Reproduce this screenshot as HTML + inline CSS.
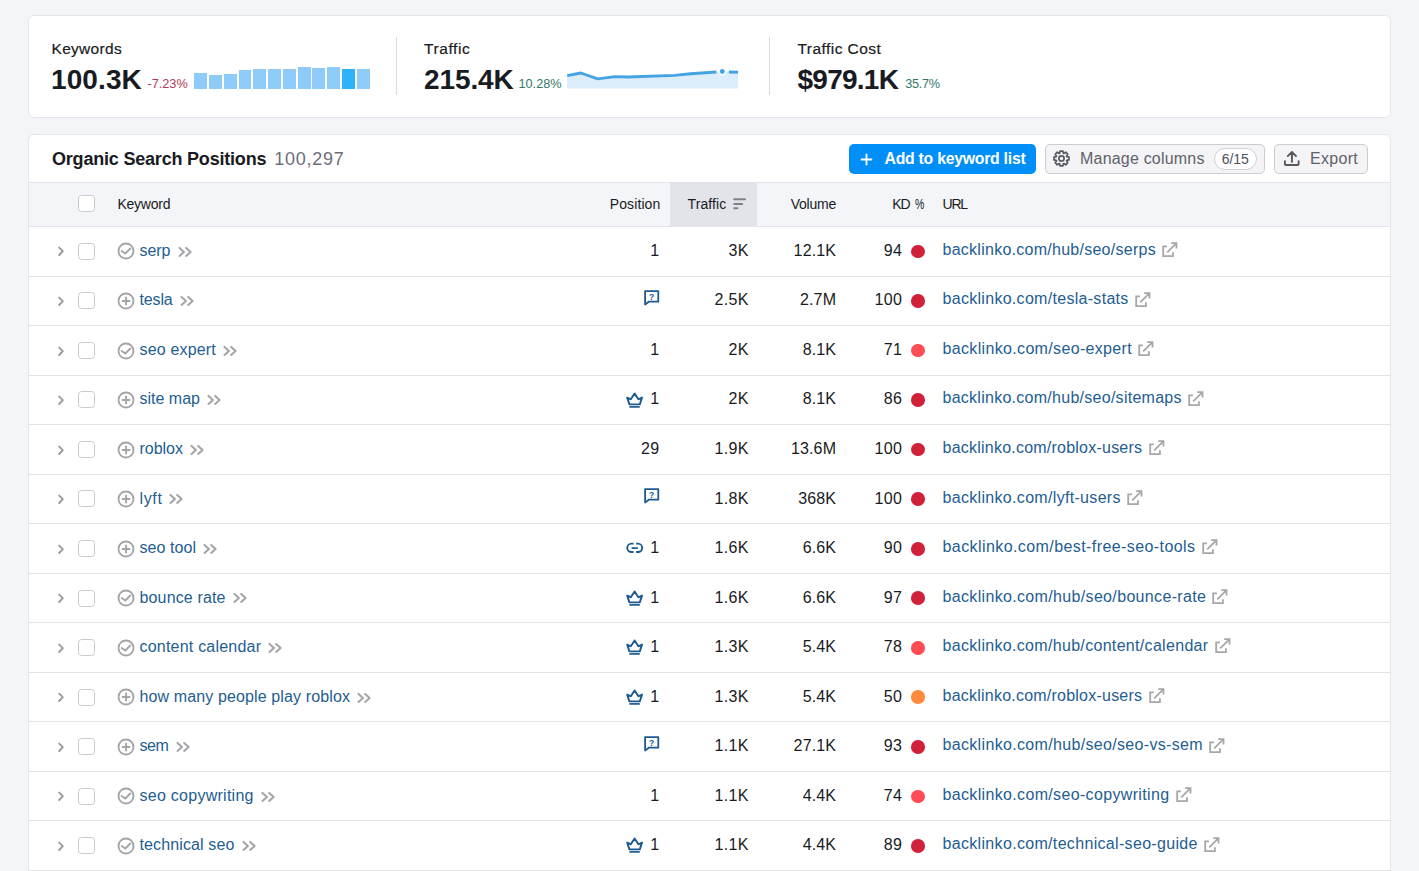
<!DOCTYPE html>
<html><head><meta charset="utf-8">
<style>
*{box-sizing:border-box;margin:0;padding:0}
html,body{width:1419px;height:871px;overflow:hidden;background:#f4f5f9;font-family:"Liberation Sans",sans-serif;color:#191b23}
.card{position:absolute;background:#fff;border:1px solid #e5e6ea;border-radius:6px}
.a{position:absolute}
.t{position:absolute;line-height:1;white-space:nowrap}
.sk{-webkit-text-stroke:0.2px currentColor}
.cb{width:17px;height:17px;border:1px solid #c9cacf;border-radius:3.5px;background:#fff}
</style></head><body>
<div class="card" style="left:28px;top:15px;width:1363px;height:103px"></div>
<div class="card" style="left:28px;top:134px;width:1363px;height:800px"></div>
<div class="t sk" style="left:51.50px;top:41.08px;font-size:15.5px;letter-spacing:0.3px;color:#191b23;font-weight:normal;">Keywords</div>
<div class="t " style="left:51.00px;top:65.80px;font-size:28px;letter-spacing:0.1px;color:#191b23;font-weight:bold;">100.3K</div>
<div class="t " style="left:147.50px;top:78.45px;font-size:12.7px;letter-spacing:0px;color:#b03a52;font-weight:normal;">-7.23%</div>
<div class="a" style="left:194.2px;top:72.7px;width:12.9px;height:16.2px;background:#8fcbf8"></div>
<div class="a" style="left:209.0px;top:74.5px;width:12.9px;height:14.4px;background:#8fcbf8"></div>
<div class="a" style="left:224.0px;top:73.7px;width:12.9px;height:15.2px;background:#8fcbf8"></div>
<div class="a" style="left:238.6px;top:69.9px;width:12.9px;height:19.0px;background:#8fcbf8"></div>
<div class="a" style="left:253.4px;top:68.9px;width:12.9px;height:20.0px;background:#8fcbf8"></div>
<div class="a" style="left:268.2px;top:68.9px;width:12.9px;height:20.0px;background:#8fcbf8"></div>
<div class="a" style="left:283.0px;top:69.2px;width:12.9px;height:19.7px;background:#8fcbf8"></div>
<div class="a" style="left:297.8px;top:67.0px;width:12.9px;height:21.9px;background:#8fcbf8"></div>
<div class="a" style="left:312.3px;top:68.0px;width:12.9px;height:20.9px;background:#8fcbf8"></div>
<div class="a" style="left:327.0px;top:67.0px;width:12.9px;height:21.9px;background:#8fcbf8"></div>
<div class="a" style="left:342.2px;top:69.2px;width:12.9px;height:19.7px;background:#2db3fa"></div>
<div class="a" style="left:357.0px;top:69.4px;width:12.9px;height:19.5px;background:#8fcbf8"></div>
<div class="a" style="left:396px;top:37px;width:1px;height:58px;background:#d9dae0"></div>
<div class="t sk" style="left:424.00px;top:41.08px;font-size:15.5px;letter-spacing:0.6px;color:#191b23;font-weight:normal;">Traffic</div>
<div class="t " style="left:424.00px;top:65.80px;font-size:28px;letter-spacing:-0.1px;color:#191b23;font-weight:bold;">215.4K</div>
<div class="t " style="left:518.50px;top:78.45px;font-size:12.7px;letter-spacing:0px;color:#2f7868;font-weight:normal;">10.28%</div>
<svg class="a" style="left:0px;top:0px" width="1419" height="120" viewBox="0 0 1419 120">
<path d="M567.2 75.6 L580.9 73 L597.8 78.9 L614.8 76.6 L627.8 77 L674.7 75.4 L690.4 73.7 L715.8 72 L722.3 71.5 L738 72 L738 88.4 L567.2 88.4 Z" fill="#dcedfc"/>
<path d="M567.2 75.6 L580.9 73 L597.8 78.9 L614.8 76.6 L627.8 77 L674.7 75.4 L690.4 73.7 L716.5 72" fill="none" stroke="#45a3e3" stroke-width="2.9" stroke-linejoin="round"/>
<path d="M728.8 72 L738 72.2" fill="none" stroke="#45a3e3" stroke-width="2.9"/>
<circle cx="722.3" cy="71.5" r="3.6" fill="#fff"/>
<circle cx="722.3" cy="71.5" r="2.4" fill="#43a2e4"/></svg>
<div class="a" style="left:769px;top:37px;width:1px;height:58px;background:#d9dae0"></div>
<div class="t sk" style="left:797.50px;top:41.08px;font-size:15.5px;letter-spacing:0.45px;color:#191b23;font-weight:normal;">Traffic Cost</div>
<div class="t " style="left:797.50px;top:65.80px;font-size:28px;letter-spacing:-0.75px;color:#191b23;font-weight:bold;">$979.1K</div>
<div class="t " style="left:905.20px;top:78.45px;font-size:12.7px;letter-spacing:-0.3px;color:#2f7868;font-weight:normal;">35.7%</div>
<div class="t " style="left:52.00px;top:150.26px;font-size:18px;letter-spacing:-0.2px;color:#191b23;font-weight:bold;">Organic Search Positions</div>
<div class="t " style="left:274.20px;top:150.26px;font-size:18px;letter-spacing:0.75px;color:#6c6e79;font-weight:normal;">100,297</div>
<div class="a" style="left:849px;top:144px;width:187px;height:30px;border-radius:5px;background:#008ff8"></div>
<svg class="a" style="left:860px;top:153px" width="13" height="13" viewBox="0 0 13 13"><path d="M6.5 0.8 V12.2 M0.8 6.5 H12.2" stroke="#fff" stroke-width="1.8"/></svg>
<div class="t " style="left:884.50px;top:151.13px;font-size:15.8px;letter-spacing:-0.25px;color:#fff;font-weight:bold;">Add to keyword list</div>
<div class="a" style="left:1045px;top:144px;width:220px;height:30px;border-radius:5px;background:#f4f4f6;border:1px solid #cbccd1"></div>
<svg class="a" style="left:1052.4px;top:149.1px" width="19" height="19" viewBox="0 0 19 19"><circle cx="9.5" cy="9.5" r="2.6" fill="none" stroke="#575961" stroke-width="1.7"/><path d="M7.63 4.22 L8.06 2.04 L10.94 2.04 L11.37 4.22 L11.91 4.45 L13.76 3.21 L15.79 5.24 L14.55 7.09 L14.78 7.63 L16.96 8.06 L16.96 10.94 L14.78 11.37 L14.55 11.91 L15.79 13.76 L13.76 15.79 L11.91 14.55 L11.37 14.78 L10.94 16.96 L8.06 16.96 L7.63 14.78 L7.09 14.55 L5.24 15.79 L3.21 13.76 L4.45 11.91 L4.22 11.37 L2.04 10.94 L2.04 8.06 L4.22 7.63 L4.45 7.09 L3.21 5.24 L5.24 3.21 L7.09 4.45 Z" fill="none" stroke="#575961" stroke-width="1.7" stroke-linejoin="round"/></svg>
<div class="t " style="left:1080.00px;top:150.86px;font-size:16px;letter-spacing:0.2px;color:#60626b;font-weight:normal;">Manage columns</div>
<div class="a" style="left:1214px;top:148px;width:42.5px;height:22px;border-radius:11px;background:#fff;border:1px solid #cfd0d4"></div>
<div class="t " style="left:1221.80px;top:152.45px;font-size:14px;letter-spacing:-0.1px;color:#4e5058;font-weight:normal;">6/15</div>
<div class="a" style="left:1274px;top:144px;width:94px;height:30px;border-radius:5px;background:#f4f4f6;border:1px solid #cbccd1"></div>
<svg class="a" style="left:1283px;top:150px" width="18" height="18" viewBox="0 0 18 18"><path d="M8.9 11.9 V2.4 M4.8 6.1 L8.9 2.0 L13.0 6.1 M1.9 11.2 V14.1 Q1.9 15 2.8 15 H14.7 Q15.6 15 15.6 14.1 V11.2" fill="none" stroke="#575961" stroke-width="1.9" stroke-linejoin="round" stroke-linecap="round"/></svg>
<div class="t " style="left:1310.00px;top:150.86px;font-size:16px;letter-spacing:0.3px;color:#60626b;font-weight:normal;">Export</div>
<div class="a" style="left:29px;top:182px;width:1361px;height:45px;background:#f4f5f9;border-top:1px solid #e3e4ea;border-bottom:1px solid #e3e4ea"></div>
<div class="a cb" style="left:78px;top:195px"></div>
<div class="t " style="left:117.50px;top:196.75px;font-size:14px;letter-spacing:-0.25px;color:#191b23;font-weight:normal;">Keyword</div>
<div class="t " style="left:0;width:660.40px;text-align:right;top:196.75px;font-size:14px;letter-spacing:0.1px;color:#191b23;font-weight:normal;">Position</div>
<div class="a" style="left:669.5px;top:183px;width:87px;height:43px;background:#e3e4ea"></div>
<div class="t " style="left:687.50px;top:196.75px;font-size:14px;letter-spacing:0.1px;color:#191b23;font-weight:normal;">Traffic</div>
<svg class="a" style="left:732px;top:197px" width="15" height="13" viewBox="0 0 15 13"><path d="M2.2 2.2 H13 M2.2 6.9 H10.2 M2.2 11.2 H5.4" stroke="#7e8089" stroke-width="2" stroke-linecap="round"/></svg>
<div class="t " style="left:0;width:835.95px;text-align:right;top:196.75px;font-size:14px;letter-spacing:-0.25px;color:#191b23;font-weight:normal;">Volume</div>
<div class="t " style="left:892.20px;top:196.75px;font-size:14px;letter-spacing:-1.0px;color:#191b23;font-weight:normal;">KD</div>
<div class="t " style="left:914.50px;top:196.75px;font-size:14px;letter-spacing:0px;color:#191b23;font-weight:normal;transform:scaleX(0.75);transform-origin:0 0">%</div>
<div class="t " style="left:942.60px;top:196.75px;font-size:14px;letter-spacing:-1.3px;color:#191b23;font-weight:normal;">URL</div>
<div class="a" style="left:28px;top:276px;width:1363px;height:1px;background:#e2e2e5"></div>
<svg class="a" style="left:57px;top:245.47px" width="8" height="12" viewBox="0 0 8 12"><path d="M2.2 2.6 L5.8 6.1 L2.2 10.0" fill="none" stroke="#9c9ca2" stroke-width="2" stroke-linecap="round" stroke-linejoin="round"/></svg>
<div class="a cb" style="left:78px;top:242.77px"></div>
<svg class="a" style="left:116.5px;top:242.47px" width="18" height="18" viewBox="0 0 18 18"><circle cx="9" cy="9" r="7.5" fill="none" stroke="#a3a3a8" stroke-width="1.8"/><path d="M4.6 9.0 L8.3 11.5 L13.3 6.5" fill="none" stroke="#a3a3a8" stroke-width="1.8" stroke-linecap="round" stroke-linejoin="round"/></svg>
<div class="t " style="left:139.50px;top:242.83px;font-size:16px;letter-spacing:-0.1px;color:#245d91;font-weight:normal;">serp</div>
<svg class="a" style="left:177.6px;top:245.67px" width="14" height="12" viewBox="0 0 14 12"><path d="M1.5 1.9 L5.9 5.9 L1.5 9.9 M8.2 1.9 L12.6 5.9 L8.2 9.9" fill="none" stroke="#a3a3a8" stroke-width="2.0" stroke-linecap="round" stroke-linejoin="round"/></svg>
<div class="t " style="left:0;width:659.50px;text-align:right;top:242.83px;font-size:16px;letter-spacing:0.3px;color:#191b23;font-weight:normal;">1</div>
<div class="t " style="left:0;width:748.70px;text-align:right;top:242.83px;font-size:16px;letter-spacing:0.3px;color:#191b23;font-weight:normal;">3K</div>
<div class="t " style="left:0;width:836.15px;text-align:right;top:242.83px;font-size:16px;letter-spacing:0.15px;color:#191b23;font-weight:normal;">12.1K</div>
<div class="t " style="left:0;width:902.20px;text-align:right;top:242.83px;font-size:16px;letter-spacing:0.3px;color:#191b23;font-weight:normal;">94</div>
<div class="a" style="left:911.2px;top:244.62px;width:13.7px;height:13.7px;border-radius:50%;background:#d1203a"></div>
<div class="t " style="left:942.50px;top:241.83px;font-size:16px;letter-spacing:0.262px;color:#245d91;font-weight:normal;">backlinko.com/hub/seo/serps</div>
<svg class="a" style="left:1162.1px;top:242.17px" width="16" height="16" viewBox="0 0 16 16"><path d="M4.9 4.3 H1.2 V14.2 H10.9 V10.3" fill="none" stroke="#a6a6ab" stroke-width="1.8"/><path d="M9.2 1.1 H14.5 V6.4 M14.5 1.1 L5.2 10.3" fill="none" stroke="#a6a6ab" stroke-width="1.8"/></svg>
<div class="a" style="left:28px;top:325px;width:1363px;height:1px;background:#e2e2e5"></div>
<svg class="a" style="left:57px;top:295.01px" width="8" height="12" viewBox="0 0 8 12"><path d="M2.2 2.6 L5.8 6.1 L2.2 10.0" fill="none" stroke="#9c9ca2" stroke-width="2" stroke-linecap="round" stroke-linejoin="round"/></svg>
<div class="a cb" style="left:78px;top:292.31px"></div>
<svg class="a" style="left:116.5px;top:292.01px" width="18" height="18" viewBox="0 0 18 18"><circle cx="9" cy="9" r="7.5" fill="none" stroke="#a3a3a8" stroke-width="1.8"/><path d="M9.1 4.8 V13.2 M4.9 9 H13.3" fill="none" stroke="#a3a3a8" stroke-width="1.9"/></svg>
<div class="t " style="left:139.50px;top:292.37px;font-size:16px;letter-spacing:-0.15px;color:#245d91;font-weight:normal;">tesla</div>
<svg class="a" style="left:180.0px;top:295.21px" width="14" height="12" viewBox="0 0 14 12"><path d="M1.5 1.9 L5.9 5.9 L1.5 9.9 M8.2 1.9 L12.6 5.9 L8.2 9.9" fill="none" stroke="#a3a3a8" stroke-width="2.0" stroke-linecap="round" stroke-linejoin="round"/></svg>
<svg class="a" style="left:643px;top:290.01px" width="17" height="17" viewBox="0 0 17 17"><path d="M2.1 14.5 V1.2 H15.3 V11.7 H5.8 Z" fill="none" stroke="#1d5a8f" stroke-width="1.8" stroke-linejoin="round"/><text x="8.7" y="9.6" font-size="8.5" font-family="Liberation Sans" font-weight="bold" fill="#1d5a8f" text-anchor="middle">?</text></svg>
<div class="t " style="left:0;width:748.70px;text-align:right;top:292.37px;font-size:16px;letter-spacing:0.3px;color:#191b23;font-weight:normal;">2.5K</div>
<div class="t " style="left:0;width:836.15px;text-align:right;top:292.37px;font-size:16px;letter-spacing:0.15px;color:#191b23;font-weight:normal;">2.7M</div>
<div class="t " style="left:0;width:902.20px;text-align:right;top:292.37px;font-size:16px;letter-spacing:0.3px;color:#191b23;font-weight:normal;">100</div>
<div class="a" style="left:911.2px;top:294.16px;width:13.7px;height:13.7px;border-radius:50%;background:#d1203a"></div>
<div class="t " style="left:942.50px;top:291.37px;font-size:16px;letter-spacing:0.296px;color:#245d91;font-weight:normal;">backlinko.com/tesla-stats</div>
<svg class="a" style="left:1134.8px;top:291.71px" width="16" height="16" viewBox="0 0 16 16"><path d="M4.9 4.3 H1.2 V14.2 H10.9 V10.3" fill="none" stroke="#a6a6ab" stroke-width="1.8"/><path d="M9.2 1.1 H14.5 V6.4 M14.5 1.1 L5.2 10.3" fill="none" stroke="#a6a6ab" stroke-width="1.8"/></svg>
<div class="a" style="left:28px;top:375px;width:1363px;height:1px;background:#e2e2e5"></div>
<svg class="a" style="left:57px;top:344.55px" width="8" height="12" viewBox="0 0 8 12"><path d="M2.2 2.6 L5.8 6.1 L2.2 10.0" fill="none" stroke="#9c9ca2" stroke-width="2" stroke-linecap="round" stroke-linejoin="round"/></svg>
<div class="a cb" style="left:78px;top:341.85px"></div>
<svg class="a" style="left:116.5px;top:341.55px" width="18" height="18" viewBox="0 0 18 18"><circle cx="9" cy="9" r="7.5" fill="none" stroke="#a3a3a8" stroke-width="1.8"/><path d="M4.6 9.0 L8.3 11.5 L13.3 6.5" fill="none" stroke="#a3a3a8" stroke-width="1.8" stroke-linecap="round" stroke-linejoin="round"/></svg>
<div class="t " style="left:139.50px;top:341.91px;font-size:16px;letter-spacing:0.167px;color:#245d91;font-weight:normal;">seo expert</div>
<svg class="a" style="left:223.0px;top:344.75px" width="14" height="12" viewBox="0 0 14 12"><path d="M1.5 1.9 L5.9 5.9 L1.5 9.9 M8.2 1.9 L12.6 5.9 L8.2 9.9" fill="none" stroke="#a3a3a8" stroke-width="2.0" stroke-linecap="round" stroke-linejoin="round"/></svg>
<div class="t " style="left:0;width:659.50px;text-align:right;top:341.91px;font-size:16px;letter-spacing:0.3px;color:#191b23;font-weight:normal;">1</div>
<div class="t " style="left:0;width:748.70px;text-align:right;top:341.91px;font-size:16px;letter-spacing:0.3px;color:#191b23;font-weight:normal;">2K</div>
<div class="t " style="left:0;width:836.15px;text-align:right;top:341.91px;font-size:16px;letter-spacing:0.15px;color:#191b23;font-weight:normal;">8.1K</div>
<div class="t " style="left:0;width:902.20px;text-align:right;top:341.91px;font-size:16px;letter-spacing:0.3px;color:#191b23;font-weight:normal;">71</div>
<div class="a" style="left:911.2px;top:343.70px;width:13.7px;height:13.7px;border-radius:50%;background:#ff4b55"></div>
<div class="t " style="left:942.50px;top:340.91px;font-size:16px;letter-spacing:0.339px;color:#245d91;font-weight:normal;">backlinko.com/seo-expert</div>
<svg class="a" style="left:1138.2px;top:341.25px" width="16" height="16" viewBox="0 0 16 16"><path d="M4.9 4.3 H1.2 V14.2 H10.9 V10.3" fill="none" stroke="#a6a6ab" stroke-width="1.8"/><path d="M9.2 1.1 H14.5 V6.4 M14.5 1.1 L5.2 10.3" fill="none" stroke="#a6a6ab" stroke-width="1.8"/></svg>
<div class="a" style="left:28px;top:424px;width:1363px;height:1px;background:#e2e2e5"></div>
<svg class="a" style="left:57px;top:394.09px" width="8" height="12" viewBox="0 0 8 12"><path d="M2.2 2.6 L5.8 6.1 L2.2 10.0" fill="none" stroke="#9c9ca2" stroke-width="2" stroke-linecap="round" stroke-linejoin="round"/></svg>
<div class="a cb" style="left:78px;top:391.39px"></div>
<svg class="a" style="left:116.5px;top:391.09px" width="18" height="18" viewBox="0 0 18 18"><circle cx="9" cy="9" r="7.5" fill="none" stroke="#a3a3a8" stroke-width="1.8"/><path d="M9.1 4.8 V13.2 M4.9 9 H13.3" fill="none" stroke="#a3a3a8" stroke-width="1.9"/></svg>
<div class="t " style="left:139.50px;top:391.45px;font-size:16px;letter-spacing:0.0px;color:#245d91;font-weight:normal;">site map</div>
<svg class="a" style="left:207.3px;top:394.29px" width="14" height="12" viewBox="0 0 14 12"><path d="M1.5 1.9 L5.9 5.9 L1.5 9.9 M8.2 1.9 L12.6 5.9 L8.2 9.9" fill="none" stroke="#a3a3a8" stroke-width="2.0" stroke-linecap="round" stroke-linejoin="round"/></svg>
<svg class="a" style="left:625px;top:390.59px" width="19" height="17" viewBox="0 0 19 17"><path d="M2.2 6.6 L5.8 8.3 L9.6 2.4 L13.4 8.3 L17.0 6.6 L14.8 13.4 H4.4 Z" fill="none" stroke="#1d5a8f" stroke-width="1.9" stroke-linejoin="round"/><path d="M4.4 15.9 H14.8" stroke="#1d5a8f" stroke-width="1.7"/></svg>
<div class="t " style="left:0;width:659.50px;text-align:right;top:391.45px;font-size:16px;letter-spacing:0.3px;color:#191b23;font-weight:normal;">1</div>
<div class="t " style="left:0;width:748.70px;text-align:right;top:391.45px;font-size:16px;letter-spacing:0.3px;color:#191b23;font-weight:normal;">2K</div>
<div class="t " style="left:0;width:836.15px;text-align:right;top:391.45px;font-size:16px;letter-spacing:0.15px;color:#191b23;font-weight:normal;">8.1K</div>
<div class="t " style="left:0;width:902.20px;text-align:right;top:391.45px;font-size:16px;letter-spacing:0.3px;color:#191b23;font-weight:normal;">86</div>
<div class="a" style="left:911.2px;top:393.24px;width:13.7px;height:13.7px;border-radius:50%;background:#d1203a"></div>
<div class="t " style="left:942.50px;top:390.45px;font-size:16px;letter-spacing:0.269px;color:#245d91;font-weight:normal;">backlinko.com/hub/seo/sitemaps</div>
<svg class="a" style="left:1188.0px;top:390.79px" width="16" height="16" viewBox="0 0 16 16"><path d="M4.9 4.3 H1.2 V14.2 H10.9 V10.3" fill="none" stroke="#a6a6ab" stroke-width="1.8"/><path d="M9.2 1.1 H14.5 V6.4 M14.5 1.1 L5.2 10.3" fill="none" stroke="#a6a6ab" stroke-width="1.8"/></svg>
<div class="a" style="left:28px;top:474px;width:1363px;height:1px;background:#e2e2e5"></div>
<svg class="a" style="left:57px;top:443.63px" width="8" height="12" viewBox="0 0 8 12"><path d="M2.2 2.6 L5.8 6.1 L2.2 10.0" fill="none" stroke="#9c9ca2" stroke-width="2" stroke-linecap="round" stroke-linejoin="round"/></svg>
<div class="a cb" style="left:78px;top:440.93px"></div>
<svg class="a" style="left:116.5px;top:440.63px" width="18" height="18" viewBox="0 0 18 18"><circle cx="9" cy="9" r="7.5" fill="none" stroke="#a3a3a8" stroke-width="1.8"/><path d="M9.1 4.8 V13.2 M4.9 9 H13.3" fill="none" stroke="#a3a3a8" stroke-width="1.9"/></svg>
<div class="t " style="left:139.50px;top:440.99px;font-size:16px;letter-spacing:-0.04px;color:#245d91;font-weight:normal;">roblox</div>
<svg class="a" style="left:190.2px;top:443.83px" width="14" height="12" viewBox="0 0 14 12"><path d="M1.5 1.9 L5.9 5.9 L1.5 9.9 M8.2 1.9 L12.6 5.9 L8.2 9.9" fill="none" stroke="#a3a3a8" stroke-width="2.0" stroke-linecap="round" stroke-linejoin="round"/></svg>
<div class="t " style="left:0;width:659.50px;text-align:right;top:440.99px;font-size:16px;letter-spacing:0.3px;color:#191b23;font-weight:normal;">29</div>
<div class="t " style="left:0;width:748.70px;text-align:right;top:440.99px;font-size:16px;letter-spacing:0.3px;color:#191b23;font-weight:normal;">1.9K</div>
<div class="t " style="left:0;width:836.15px;text-align:right;top:440.99px;font-size:16px;letter-spacing:0.15px;color:#191b23;font-weight:normal;">13.6M</div>
<div class="t " style="left:0;width:902.20px;text-align:right;top:440.99px;font-size:16px;letter-spacing:0.3px;color:#191b23;font-weight:normal;">100</div>
<div class="a" style="left:911.2px;top:442.78px;width:13.7px;height:13.7px;border-radius:50%;background:#d1203a"></div>
<div class="t " style="left:942.50px;top:439.99px;font-size:16px;letter-spacing:0.228px;color:#245d91;font-weight:normal;">backlinko.com/roblox-users</div>
<svg class="a" style="left:1148.6px;top:440.33px" width="16" height="16" viewBox="0 0 16 16"><path d="M4.9 4.3 H1.2 V14.2 H10.9 V10.3" fill="none" stroke="#a6a6ab" stroke-width="1.8"/><path d="M9.2 1.1 H14.5 V6.4 M14.5 1.1 L5.2 10.3" fill="none" stroke="#a6a6ab" stroke-width="1.8"/></svg>
<div class="a" style="left:28px;top:523px;width:1363px;height:1px;background:#e2e2e5"></div>
<svg class="a" style="left:57px;top:493.17px" width="8" height="12" viewBox="0 0 8 12"><path d="M2.2 2.6 L5.8 6.1 L2.2 10.0" fill="none" stroke="#9c9ca2" stroke-width="2" stroke-linecap="round" stroke-linejoin="round"/></svg>
<div class="a cb" style="left:78px;top:490.47px"></div>
<svg class="a" style="left:116.5px;top:490.17px" width="18" height="18" viewBox="0 0 18 18"><circle cx="9" cy="9" r="7.5" fill="none" stroke="#a3a3a8" stroke-width="1.8"/><path d="M9.1 4.8 V13.2 M4.9 9 H13.3" fill="none" stroke="#a3a3a8" stroke-width="1.9"/></svg>
<div class="t " style="left:139.50px;top:490.53px;font-size:16px;letter-spacing:0.633px;color:#245d91;font-weight:normal;">lyft</div>
<svg class="a" style="left:169.1px;top:493.37px" width="14" height="12" viewBox="0 0 14 12"><path d="M1.5 1.9 L5.9 5.9 L1.5 9.9 M8.2 1.9 L12.6 5.9 L8.2 9.9" fill="none" stroke="#a3a3a8" stroke-width="2.0" stroke-linecap="round" stroke-linejoin="round"/></svg>
<svg class="a" style="left:643px;top:488.17px" width="17" height="17" viewBox="0 0 17 17"><path d="M2.1 14.5 V1.2 H15.3 V11.7 H5.8 Z" fill="none" stroke="#1d5a8f" stroke-width="1.8" stroke-linejoin="round"/><text x="8.7" y="9.6" font-size="8.5" font-family="Liberation Sans" font-weight="bold" fill="#1d5a8f" text-anchor="middle">?</text></svg>
<div class="t " style="left:0;width:748.70px;text-align:right;top:490.53px;font-size:16px;letter-spacing:0.3px;color:#191b23;font-weight:normal;">1.8K</div>
<div class="t " style="left:0;width:836.15px;text-align:right;top:490.53px;font-size:16px;letter-spacing:0.15px;color:#191b23;font-weight:normal;">368K</div>
<div class="t " style="left:0;width:902.20px;text-align:right;top:490.53px;font-size:16px;letter-spacing:0.3px;color:#191b23;font-weight:normal;">100</div>
<div class="a" style="left:911.2px;top:492.32px;width:13.7px;height:13.7px;border-radius:50%;background:#d1203a"></div>
<div class="t " style="left:942.50px;top:489.53px;font-size:16px;letter-spacing:0.317px;color:#245d91;font-weight:normal;">backlinko.com/lyft-users</div>
<svg class="a" style="left:1127.0px;top:489.87px" width="16" height="16" viewBox="0 0 16 16"><path d="M4.9 4.3 H1.2 V14.2 H10.9 V10.3" fill="none" stroke="#a6a6ab" stroke-width="1.8"/><path d="M9.2 1.1 H14.5 V6.4 M14.5 1.1 L5.2 10.3" fill="none" stroke="#a6a6ab" stroke-width="1.8"/></svg>
<div class="a" style="left:28px;top:573px;width:1363px;height:1px;background:#e2e2e5"></div>
<svg class="a" style="left:57px;top:542.71px" width="8" height="12" viewBox="0 0 8 12"><path d="M2.2 2.6 L5.8 6.1 L2.2 10.0" fill="none" stroke="#9c9ca2" stroke-width="2" stroke-linecap="round" stroke-linejoin="round"/></svg>
<div class="a cb" style="left:78px;top:540.01px"></div>
<svg class="a" style="left:116.5px;top:539.71px" width="18" height="18" viewBox="0 0 18 18"><circle cx="9" cy="9" r="7.5" fill="none" stroke="#a3a3a8" stroke-width="1.8"/><path d="M9.1 4.8 V13.2 M4.9 9 H13.3" fill="none" stroke="#a3a3a8" stroke-width="1.9"/></svg>
<div class="t " style="left:139.50px;top:540.07px;font-size:16px;letter-spacing:0.071px;color:#245d91;font-weight:normal;">seo tool</div>
<svg class="a" style="left:203.3px;top:542.91px" width="14" height="12" viewBox="0 0 14 12"><path d="M1.5 1.9 L5.9 5.9 L1.5 9.9 M8.2 1.9 L12.6 5.9 L8.2 9.9" fill="none" stroke="#a3a3a8" stroke-width="2.0" stroke-linecap="round" stroke-linejoin="round"/></svg>
<svg class="a" style="left:625px;top:541.71px" width="19" height="12" viewBox="0 0 19 12"><path d="M8.5 1.6 H6.47 A4.22 4.22 0 0 0 6.47 10.05 H8.5 M11.1 1.6 H13 A4.22 4.22 0 0 1 13 10.05 H11.1 M6.6 6.1 H12.8" fill="none" stroke="#1d5a8f" stroke-width="1.9"/></svg>
<div class="t " style="left:0;width:659.50px;text-align:right;top:540.07px;font-size:16px;letter-spacing:0.3px;color:#191b23;font-weight:normal;">1</div>
<div class="t " style="left:0;width:748.70px;text-align:right;top:540.07px;font-size:16px;letter-spacing:0.3px;color:#191b23;font-weight:normal;">1.6K</div>
<div class="t " style="left:0;width:836.15px;text-align:right;top:540.07px;font-size:16px;letter-spacing:0.15px;color:#191b23;font-weight:normal;">6.6K</div>
<div class="t " style="left:0;width:902.20px;text-align:right;top:540.07px;font-size:16px;letter-spacing:0.3px;color:#191b23;font-weight:normal;">90</div>
<div class="a" style="left:911.2px;top:541.86px;width:13.7px;height:13.7px;border-radius:50%;background:#d1203a"></div>
<div class="t " style="left:942.50px;top:539.07px;font-size:16px;letter-spacing:0.416px;color:#245d91;font-weight:normal;">backlinko.com/best-free-seo-tools</div>
<svg class="a" style="left:1201.5px;top:539.41px" width="16" height="16" viewBox="0 0 16 16"><path d="M4.9 4.3 H1.2 V14.2 H10.9 V10.3" fill="none" stroke="#a6a6ab" stroke-width="1.8"/><path d="M9.2 1.1 H14.5 V6.4 M14.5 1.1 L5.2 10.3" fill="none" stroke="#a6a6ab" stroke-width="1.8"/></svg>
<div class="a" style="left:28px;top:622px;width:1363px;height:1px;background:#e2e2e5"></div>
<svg class="a" style="left:57px;top:592.25px" width="8" height="12" viewBox="0 0 8 12"><path d="M2.2 2.6 L5.8 6.1 L2.2 10.0" fill="none" stroke="#9c9ca2" stroke-width="2" stroke-linecap="round" stroke-linejoin="round"/></svg>
<div class="a cb" style="left:78px;top:589.55px"></div>
<svg class="a" style="left:116.5px;top:589.25px" width="18" height="18" viewBox="0 0 18 18"><circle cx="9" cy="9" r="7.5" fill="none" stroke="#a3a3a8" stroke-width="1.8"/><path d="M4.6 9.0 L8.3 11.5 L13.3 6.5" fill="none" stroke="#a3a3a8" stroke-width="1.8" stroke-linecap="round" stroke-linejoin="round"/></svg>
<div class="t " style="left:139.50px;top:589.61px;font-size:16px;letter-spacing:0.15px;color:#245d91;font-weight:normal;">bounce rate</div>
<svg class="a" style="left:232.8px;top:592.45px" width="14" height="12" viewBox="0 0 14 12"><path d="M1.5 1.9 L5.9 5.9 L1.5 9.9 M8.2 1.9 L12.6 5.9 L8.2 9.9" fill="none" stroke="#a3a3a8" stroke-width="2.0" stroke-linecap="round" stroke-linejoin="round"/></svg>
<svg class="a" style="left:625px;top:588.75px" width="19" height="17" viewBox="0 0 19 17"><path d="M2.2 6.6 L5.8 8.3 L9.6 2.4 L13.4 8.3 L17.0 6.6 L14.8 13.4 H4.4 Z" fill="none" stroke="#1d5a8f" stroke-width="1.9" stroke-linejoin="round"/><path d="M4.4 15.9 H14.8" stroke="#1d5a8f" stroke-width="1.7"/></svg>
<div class="t " style="left:0;width:659.50px;text-align:right;top:589.61px;font-size:16px;letter-spacing:0.3px;color:#191b23;font-weight:normal;">1</div>
<div class="t " style="left:0;width:748.70px;text-align:right;top:589.61px;font-size:16px;letter-spacing:0.3px;color:#191b23;font-weight:normal;">1.6K</div>
<div class="t " style="left:0;width:836.15px;text-align:right;top:589.61px;font-size:16px;letter-spacing:0.15px;color:#191b23;font-weight:normal;">6.6K</div>
<div class="t " style="left:0;width:902.20px;text-align:right;top:589.61px;font-size:16px;letter-spacing:0.3px;color:#191b23;font-weight:normal;">97</div>
<div class="a" style="left:911.2px;top:591.40px;width:13.7px;height:13.7px;border-radius:50%;background:#d1203a"></div>
<div class="t " style="left:942.50px;top:588.61px;font-size:16px;letter-spacing:0.338px;color:#245d91;font-weight:normal;">backlinko.com/hub/seo/bounce-rate</div>
<svg class="a" style="left:1212.4px;top:588.95px" width="16" height="16" viewBox="0 0 16 16"><path d="M4.9 4.3 H1.2 V14.2 H10.9 V10.3" fill="none" stroke="#a6a6ab" stroke-width="1.8"/><path d="M9.2 1.1 H14.5 V6.4 M14.5 1.1 L5.2 10.3" fill="none" stroke="#a6a6ab" stroke-width="1.8"/></svg>
<div class="a" style="left:28px;top:672px;width:1363px;height:1px;background:#e2e2e5"></div>
<svg class="a" style="left:57px;top:641.79px" width="8" height="12" viewBox="0 0 8 12"><path d="M2.2 2.6 L5.8 6.1 L2.2 10.0" fill="none" stroke="#9c9ca2" stroke-width="2" stroke-linecap="round" stroke-linejoin="round"/></svg>
<div class="a cb" style="left:78px;top:639.09px"></div>
<svg class="a" style="left:116.5px;top:638.79px" width="18" height="18" viewBox="0 0 18 18"><circle cx="9" cy="9" r="7.5" fill="none" stroke="#a3a3a8" stroke-width="1.8"/><path d="M4.6 9.0 L8.3 11.5 L13.3 6.5" fill="none" stroke="#a3a3a8" stroke-width="1.8" stroke-linecap="round" stroke-linejoin="round"/></svg>
<div class="t " style="left:139.50px;top:639.15px;font-size:16px;letter-spacing:0.213px;color:#245d91;font-weight:normal;">content calendar</div>
<svg class="a" style="left:268.3px;top:641.99px" width="14" height="12" viewBox="0 0 14 12"><path d="M1.5 1.9 L5.9 5.9 L1.5 9.9 M8.2 1.9 L12.6 5.9 L8.2 9.9" fill="none" stroke="#a3a3a8" stroke-width="2.0" stroke-linecap="round" stroke-linejoin="round"/></svg>
<svg class="a" style="left:625px;top:638.29px" width="19" height="17" viewBox="0 0 19 17"><path d="M2.2 6.6 L5.8 8.3 L9.6 2.4 L13.4 8.3 L17.0 6.6 L14.8 13.4 H4.4 Z" fill="none" stroke="#1d5a8f" stroke-width="1.9" stroke-linejoin="round"/><path d="M4.4 15.9 H14.8" stroke="#1d5a8f" stroke-width="1.7"/></svg>
<div class="t " style="left:0;width:659.50px;text-align:right;top:639.15px;font-size:16px;letter-spacing:0.3px;color:#191b23;font-weight:normal;">1</div>
<div class="t " style="left:0;width:748.70px;text-align:right;top:639.15px;font-size:16px;letter-spacing:0.3px;color:#191b23;font-weight:normal;">1.3K</div>
<div class="t " style="left:0;width:836.15px;text-align:right;top:639.15px;font-size:16px;letter-spacing:0.15px;color:#191b23;font-weight:normal;">5.4K</div>
<div class="t " style="left:0;width:902.20px;text-align:right;top:639.15px;font-size:16px;letter-spacing:0.3px;color:#191b23;font-weight:normal;">78</div>
<div class="a" style="left:911.2px;top:640.94px;width:13.7px;height:13.7px;border-radius:50%;background:#ff4b55"></div>
<div class="t " style="left:942.50px;top:638.15px;font-size:16px;letter-spacing:0.315px;color:#245d91;font-weight:normal;">backlinko.com/hub/content/calendar</div>
<svg class="a" style="left:1214.7px;top:638.49px" width="16" height="16" viewBox="0 0 16 16"><path d="M4.9 4.3 H1.2 V14.2 H10.9 V10.3" fill="none" stroke="#a6a6ab" stroke-width="1.8"/><path d="M9.2 1.1 H14.5 V6.4 M14.5 1.1 L5.2 10.3" fill="none" stroke="#a6a6ab" stroke-width="1.8"/></svg>
<div class="a" style="left:28px;top:721px;width:1363px;height:1px;background:#e2e2e5"></div>
<svg class="a" style="left:57px;top:691.33px" width="8" height="12" viewBox="0 0 8 12"><path d="M2.2 2.6 L5.8 6.1 L2.2 10.0" fill="none" stroke="#9c9ca2" stroke-width="2" stroke-linecap="round" stroke-linejoin="round"/></svg>
<div class="a cb" style="left:78px;top:688.63px"></div>
<svg class="a" style="left:116.5px;top:688.33px" width="18" height="18" viewBox="0 0 18 18"><circle cx="9" cy="9" r="7.5" fill="none" stroke="#a3a3a8" stroke-width="1.8"/><path d="M9.1 4.8 V13.2 M4.9 9 H13.3" fill="none" stroke="#a3a3a8" stroke-width="1.9"/></svg>
<div class="t " style="left:139.50px;top:688.69px;font-size:16px;letter-spacing:0.123px;color:#245d91;font-weight:normal;">how many people play roblox</div>
<svg class="a" style="left:357.2px;top:691.53px" width="14" height="12" viewBox="0 0 14 12"><path d="M1.5 1.9 L5.9 5.9 L1.5 9.9 M8.2 1.9 L12.6 5.9 L8.2 9.9" fill="none" stroke="#a3a3a8" stroke-width="2.0" stroke-linecap="round" stroke-linejoin="round"/></svg>
<svg class="a" style="left:625px;top:687.83px" width="19" height="17" viewBox="0 0 19 17"><path d="M2.2 6.6 L5.8 8.3 L9.6 2.4 L13.4 8.3 L17.0 6.6 L14.8 13.4 H4.4 Z" fill="none" stroke="#1d5a8f" stroke-width="1.9" stroke-linejoin="round"/><path d="M4.4 15.9 H14.8" stroke="#1d5a8f" stroke-width="1.7"/></svg>
<div class="t " style="left:0;width:659.50px;text-align:right;top:688.69px;font-size:16px;letter-spacing:0.3px;color:#191b23;font-weight:normal;">1</div>
<div class="t " style="left:0;width:748.70px;text-align:right;top:688.69px;font-size:16px;letter-spacing:0.3px;color:#191b23;font-weight:normal;">1.3K</div>
<div class="t " style="left:0;width:836.15px;text-align:right;top:688.69px;font-size:16px;letter-spacing:0.15px;color:#191b23;font-weight:normal;">5.4K</div>
<div class="t " style="left:0;width:902.20px;text-align:right;top:688.69px;font-size:16px;letter-spacing:0.3px;color:#191b23;font-weight:normal;">50</div>
<div class="a" style="left:911.2px;top:690.48px;width:13.7px;height:13.7px;border-radius:50%;background:#ff8a3d"></div>
<div class="t " style="left:942.50px;top:687.69px;font-size:16px;letter-spacing:0.228px;color:#245d91;font-weight:normal;">backlinko.com/roblox-users</div>
<svg class="a" style="left:1148.6px;top:688.03px" width="16" height="16" viewBox="0 0 16 16"><path d="M4.9 4.3 H1.2 V14.2 H10.9 V10.3" fill="none" stroke="#a6a6ab" stroke-width="1.8"/><path d="M9.2 1.1 H14.5 V6.4 M14.5 1.1 L5.2 10.3" fill="none" stroke="#a6a6ab" stroke-width="1.8"/></svg>
<div class="a" style="left:28px;top:771px;width:1363px;height:1px;background:#e2e2e5"></div>
<svg class="a" style="left:57px;top:740.87px" width="8" height="12" viewBox="0 0 8 12"><path d="M2.2 2.6 L5.8 6.1 L2.2 10.0" fill="none" stroke="#9c9ca2" stroke-width="2" stroke-linecap="round" stroke-linejoin="round"/></svg>
<div class="a cb" style="left:78px;top:738.17px"></div>
<svg class="a" style="left:116.5px;top:737.87px" width="18" height="18" viewBox="0 0 18 18"><circle cx="9" cy="9" r="7.5" fill="none" stroke="#a3a3a8" stroke-width="1.8"/><path d="M9.1 4.8 V13.2 M4.9 9 H13.3" fill="none" stroke="#a3a3a8" stroke-width="1.9"/></svg>
<div class="t " style="left:139.50px;top:738.23px;font-size:16px;letter-spacing:-0.45px;color:#245d91;font-weight:normal;">sem</div>
<svg class="a" style="left:176.1px;top:741.07px" width="14" height="12" viewBox="0 0 14 12"><path d="M1.5 1.9 L5.9 5.9 L1.5 9.9 M8.2 1.9 L12.6 5.9 L8.2 9.9" fill="none" stroke="#a3a3a8" stroke-width="2.0" stroke-linecap="round" stroke-linejoin="round"/></svg>
<svg class="a" style="left:643px;top:735.87px" width="17" height="17" viewBox="0 0 17 17"><path d="M2.1 14.5 V1.2 H15.3 V11.7 H5.8 Z" fill="none" stroke="#1d5a8f" stroke-width="1.8" stroke-linejoin="round"/><text x="8.7" y="9.6" font-size="8.5" font-family="Liberation Sans" font-weight="bold" fill="#1d5a8f" text-anchor="middle">?</text></svg>
<div class="t " style="left:0;width:748.70px;text-align:right;top:738.23px;font-size:16px;letter-spacing:0.3px;color:#191b23;font-weight:normal;">1.1K</div>
<div class="t " style="left:0;width:836.15px;text-align:right;top:738.23px;font-size:16px;letter-spacing:0.15px;color:#191b23;font-weight:normal;">27.1K</div>
<div class="t " style="left:0;width:902.20px;text-align:right;top:738.23px;font-size:16px;letter-spacing:0.3px;color:#191b23;font-weight:normal;">93</div>
<div class="a" style="left:911.2px;top:740.02px;width:13.7px;height:13.7px;border-radius:50%;background:#d1203a"></div>
<div class="t " style="left:942.50px;top:737.23px;font-size:16px;letter-spacing:0.332px;color:#245d91;font-weight:normal;">backlinko.com/hub/seo/seo-vs-sem</div>
<svg class="a" style="left:1209.2px;top:737.57px" width="16" height="16" viewBox="0 0 16 16"><path d="M4.9 4.3 H1.2 V14.2 H10.9 V10.3" fill="none" stroke="#a6a6ab" stroke-width="1.8"/><path d="M9.2 1.1 H14.5 V6.4 M14.5 1.1 L5.2 10.3" fill="none" stroke="#a6a6ab" stroke-width="1.8"/></svg>
<div class="a" style="left:28px;top:820px;width:1363px;height:1px;background:#e2e2e5"></div>
<svg class="a" style="left:57px;top:790.41px" width="8" height="12" viewBox="0 0 8 12"><path d="M2.2 2.6 L5.8 6.1 L2.2 10.0" fill="none" stroke="#9c9ca2" stroke-width="2" stroke-linecap="round" stroke-linejoin="round"/></svg>
<div class="a cb" style="left:78px;top:787.71px"></div>
<svg class="a" style="left:116.5px;top:787.41px" width="18" height="18" viewBox="0 0 18 18"><circle cx="9" cy="9" r="7.5" fill="none" stroke="#a3a3a8" stroke-width="1.8"/><path d="M4.6 9.0 L8.3 11.5 L13.3 6.5" fill="none" stroke="#a3a3a8" stroke-width="1.8" stroke-linecap="round" stroke-linejoin="round"/></svg>
<div class="t " style="left:139.50px;top:787.77px;font-size:16px;letter-spacing:0.264px;color:#245d91;font-weight:normal;">seo copywriting</div>
<svg class="a" style="left:260.8px;top:790.61px" width="14" height="12" viewBox="0 0 14 12"><path d="M1.5 1.9 L5.9 5.9 L1.5 9.9 M8.2 1.9 L12.6 5.9 L8.2 9.9" fill="none" stroke="#a3a3a8" stroke-width="2.0" stroke-linecap="round" stroke-linejoin="round"/></svg>
<div class="t " style="left:0;width:659.50px;text-align:right;top:787.77px;font-size:16px;letter-spacing:0.3px;color:#191b23;font-weight:normal;">1</div>
<div class="t " style="left:0;width:748.70px;text-align:right;top:787.77px;font-size:16px;letter-spacing:0.3px;color:#191b23;font-weight:normal;">1.1K</div>
<div class="t " style="left:0;width:836.15px;text-align:right;top:787.77px;font-size:16px;letter-spacing:0.15px;color:#191b23;font-weight:normal;">4.4K</div>
<div class="t " style="left:0;width:902.20px;text-align:right;top:787.77px;font-size:16px;letter-spacing:0.3px;color:#191b23;font-weight:normal;">74</div>
<div class="a" style="left:911.2px;top:789.56px;width:13.7px;height:13.7px;border-radius:50%;background:#ff4b55"></div>
<div class="t " style="left:942.50px;top:786.77px;font-size:16px;letter-spacing:0.343px;color:#245d91;font-weight:normal;">backlinko.com/seo-copywriting</div>
<svg class="a" style="left:1175.6px;top:787.11px" width="16" height="16" viewBox="0 0 16 16"><path d="M4.9 4.3 H1.2 V14.2 H10.9 V10.3" fill="none" stroke="#a6a6ab" stroke-width="1.8"/><path d="M9.2 1.1 H14.5 V6.4 M14.5 1.1 L5.2 10.3" fill="none" stroke="#a6a6ab" stroke-width="1.8"/></svg>
<div class="a" style="left:28px;top:870px;width:1363px;height:1px;background:#e2e2e5"></div>
<svg class="a" style="left:57px;top:839.95px" width="8" height="12" viewBox="0 0 8 12"><path d="M2.2 2.6 L5.8 6.1 L2.2 10.0" fill="none" stroke="#9c9ca2" stroke-width="2" stroke-linecap="round" stroke-linejoin="round"/></svg>
<div class="a cb" style="left:78px;top:837.25px"></div>
<svg class="a" style="left:116.5px;top:836.95px" width="18" height="18" viewBox="0 0 18 18"><circle cx="9" cy="9" r="7.5" fill="none" stroke="#a3a3a8" stroke-width="1.8"/><path d="M4.6 9.0 L8.3 11.5 L13.3 6.5" fill="none" stroke="#a3a3a8" stroke-width="1.8" stroke-linecap="round" stroke-linejoin="round"/></svg>
<div class="t " style="left:139.50px;top:837.31px;font-size:16px;letter-spacing:0.117px;color:#245d91;font-weight:normal;">technical seo</div>
<svg class="a" style="left:241.6px;top:840.15px" width="14" height="12" viewBox="0 0 14 12"><path d="M1.5 1.9 L5.9 5.9 L1.5 9.9 M8.2 1.9 L12.6 5.9 L8.2 9.9" fill="none" stroke="#a3a3a8" stroke-width="2.0" stroke-linecap="round" stroke-linejoin="round"/></svg>
<svg class="a" style="left:625px;top:836.45px" width="19" height="17" viewBox="0 0 19 17"><path d="M2.2 6.6 L5.8 8.3 L9.6 2.4 L13.4 8.3 L17.0 6.6 L14.8 13.4 H4.4 Z" fill="none" stroke="#1d5a8f" stroke-width="1.9" stroke-linejoin="round"/><path d="M4.4 15.9 H14.8" stroke="#1d5a8f" stroke-width="1.7"/></svg>
<div class="t " style="left:0;width:659.50px;text-align:right;top:837.31px;font-size:16px;letter-spacing:0.3px;color:#191b23;font-weight:normal;">1</div>
<div class="t " style="left:0;width:748.70px;text-align:right;top:837.31px;font-size:16px;letter-spacing:0.3px;color:#191b23;font-weight:normal;">1.1K</div>
<div class="t " style="left:0;width:836.15px;text-align:right;top:837.31px;font-size:16px;letter-spacing:0.15px;color:#191b23;font-weight:normal;">4.4K</div>
<div class="t " style="left:0;width:902.20px;text-align:right;top:837.31px;font-size:16px;letter-spacing:0.3px;color:#191b23;font-weight:normal;">89</div>
<div class="a" style="left:911.2px;top:839.10px;width:13.7px;height:13.7px;border-radius:50%;background:#d1203a"></div>
<div class="t " style="left:942.50px;top:836.31px;font-size:16px;letter-spacing:0.325px;color:#245d91;font-weight:normal;">backlinko.com/technical-seo-guide</div>
<svg class="a" style="left:1204.0px;top:836.65px" width="16" height="16" viewBox="0 0 16 16"><path d="M4.9 4.3 H1.2 V14.2 H10.9 V10.3" fill="none" stroke="#a6a6ab" stroke-width="1.8"/><path d="M9.2 1.1 H14.5 V6.4 M14.5 1.1 L5.2 10.3" fill="none" stroke="#a6a6ab" stroke-width="1.8"/></svg>
</body></html>
